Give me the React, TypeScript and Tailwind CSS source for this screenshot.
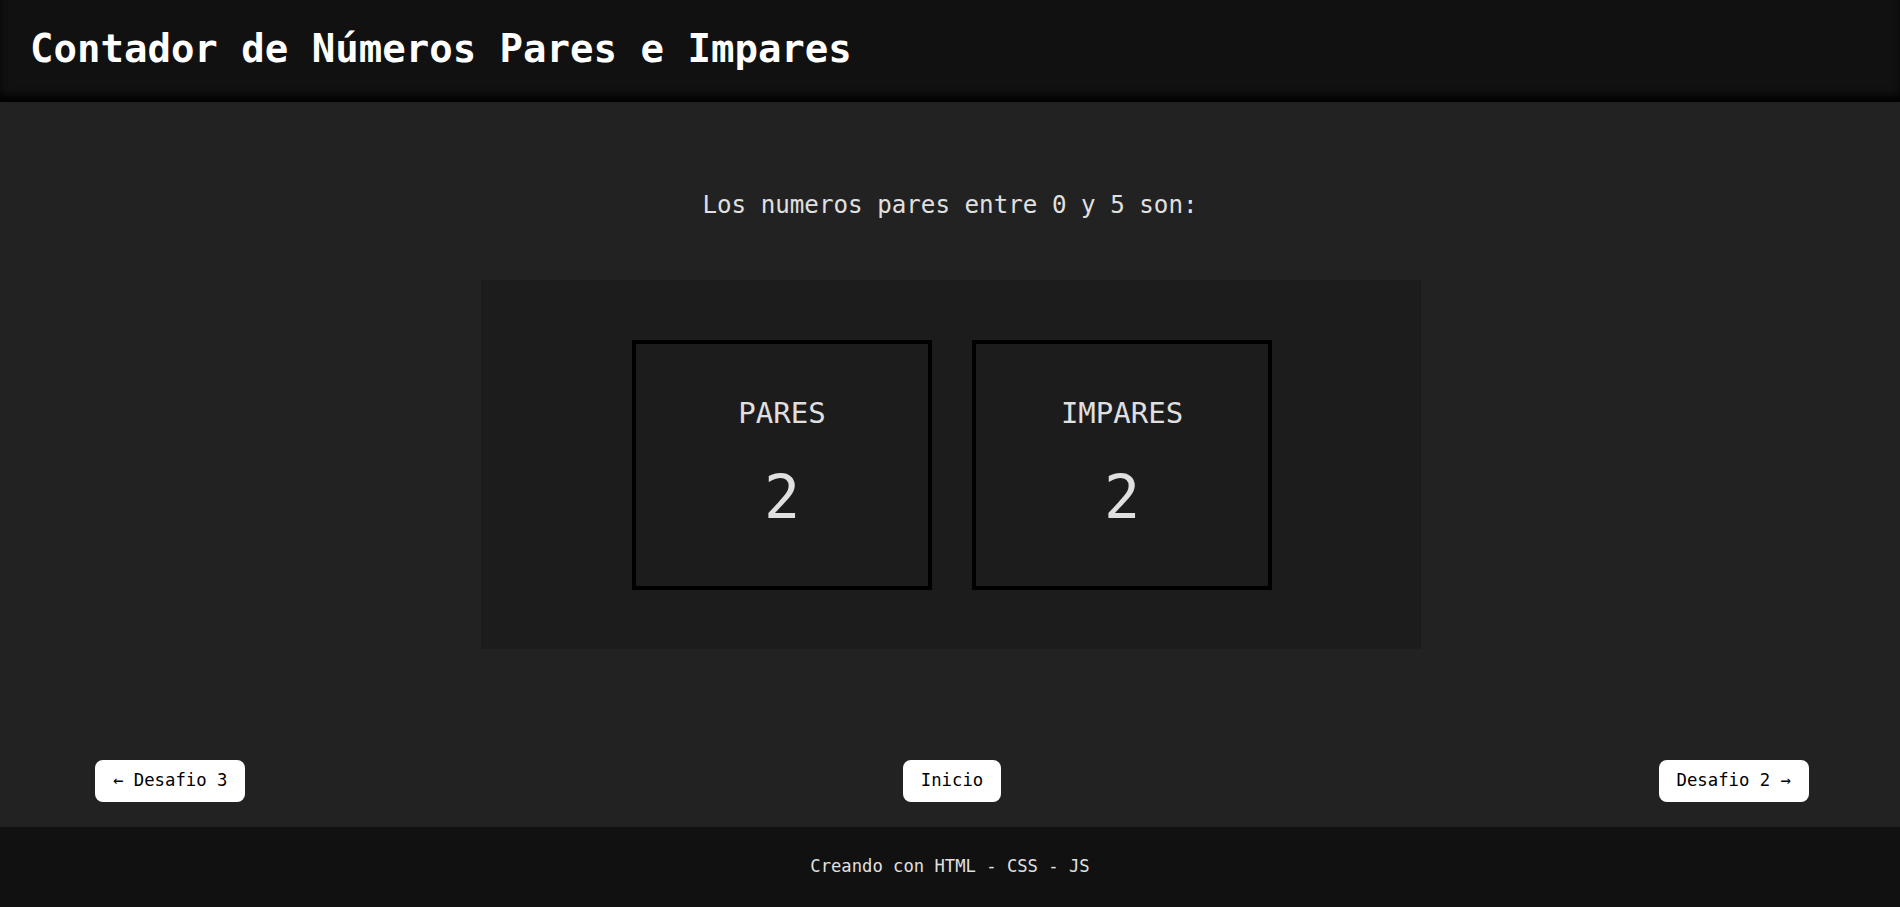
const mono = "font-['DejaVu_Sans_Mono',monospace]";

const Card = ({ label, value }: { label: string; value: number }) => (
  <div className="flex h-[250px] w-[300px] flex-col items-center justify-center gap-[30px] border-4 border-black bg-[#1c1c1c]">
    <h3 className="text-[29px] leading-[35px] text-[#e0e0e0]">{label}</h3>
    <p className="text-[60px] leading-[72px] text-[#e0e0e0]">{value}</p>
  </div>
);

const NavButton = ({ children }: { children: React.ReactNode }) => (
  <button className="flex h-[42px] items-center rounded-lg bg-white px-[18px] text-[17.3px] text-black">
    {children}
  </button>
);

export default function App() {
  return (
    <div className={`flex h-[907px] w-full flex-col bg-[#222222] ${mono}`}>
      <header className="flex h-[102px] shrink-0 items-center bg-[#111111] px-[30px] pb-[4px] shadow-[inset_0_-8px_10px_-2px_#000]">
        <h1 className="text-[39px] font-bold text-white">Contador de Números Pares e Impares</h1>
      </header>

      <main className="flex flex-1 flex-col items-center pt-[85px]">
        <h2 className="text-[24.2px] leading-[36px] text-[#e0e0e0]">Los numeros pares entre 0 y 5 son:</h2>

        <section className="ml-[2px] mt-[57px] flex h-[369px] w-[940px] items-center justify-center gap-[40px] bg-[#1c1c1c] pl-[2px]">
          <Card label="PARES" value={2} />
          <Card label="IMPARES" value={2} />
        </section>

        <nav className="mt-[111px] flex w-full justify-between pl-[95px] pr-[91px]">
          <NavButton>← Desafio 3</NavButton>
          <NavButton>Inicio</NavButton>
          <NavButton>Desafio 2 →</NavButton>
        </nav>
      </main>

      <footer className="flex h-[80px] shrink-0 items-center justify-center bg-[#111111]">
        <p className="text-[17.2px] text-[#e0e0e0]">Creando con HTML - CSS - JS</p>
      </footer>
    </div>
  );
}
